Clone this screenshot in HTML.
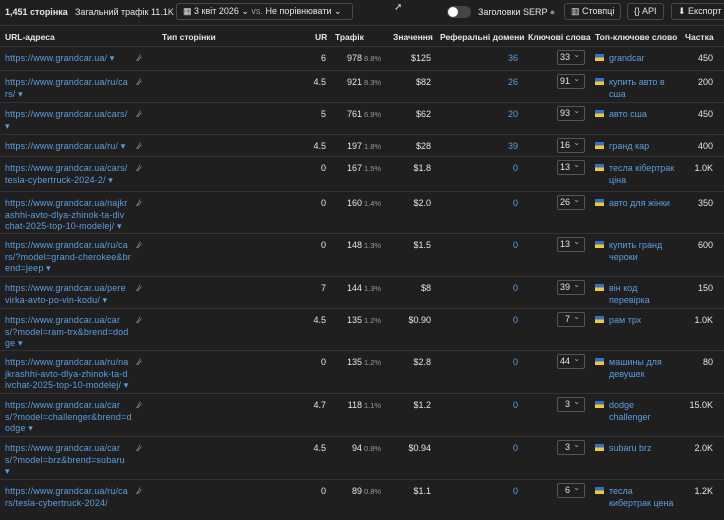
<!DOCTYPE html>
<html><head><meta charset="utf-8"><style>
*{margin:0;padding:0;box-sizing:border-box}
body{width:724px;height:512px;overflow:hidden;background:#1f1f20;font-family:"Liberation Sans",sans-serif;font-size:9px;color:#e6e6e6;position:relative}
.a{position:absolute;white-space:nowrap}
.top{position:absolute;left:0;top:0;width:724px;height:26px;border-bottom:1px solid #333}
.btn{position:absolute;top:3px;height:17px;border:1px solid #4a4a4a;border-radius:3px;line-height:15px;padding:0 6px;color:#e6e6e6;font-size:9px}
.hdr{position:absolute;top:26px;left:0;width:724px;height:21px;border-bottom:1px solid #333;font-weight:bold;font-size:8.5px}
.row{position:absolute;left:0;width:724px;border-bottom:1px solid #333}
.url{position:absolute;left:5px;top:6px;color:#5a9fe0;line-height:11.6px;white-space:nowrap;letter-spacing:0.15px}
.r{position:absolute;text-align:right;top:6px}
.link{color:#5a9fe0}
.pct{color:#999;font-size:7.5px}
.kw{position:absolute;left:557px;top:3px;width:28px;height:15px;border:1px solid #555;border-radius:2px;text-align:right;padding-right:14px;line-height:13px}
.kw:after{content:"⌄";position:absolute;right:4px;top:-3px;color:#aaa;font-size:8px}
.flag{position:absolute;left:595px;top:7px;width:9px;height:7px;background:linear-gradient(#2f6fd6 50%,#f2cb1d 50%)}
.tk{position:absolute;left:609px;top:6px;color:#5a9fe0;line-height:11.6px;white-space:nowrap}
.w{position:absolute;left:138px;top:6px;color:#aaa;font-size:9px}
</style></head><body>
<div class="top">
<div class="a" style="left:5px;top:7px;font-weight:bold">1,451 сторінка</div>
<div class="a" style="left:75px;top:7px">Загальний трафік 11.1K</div>
<div class="btn" style="left:176px;width:177px">▦ 3 квіт 2026 ⌄ <span style="color:#999">vs.</span> Не порівнювати ⌄</div>
<div class="a" style="left:394px;top:2px;color:#ddd;font-size:10px">➚</div>
<div class="a" style="left:447px;top:6px;width:24px;height:12px;border-radius:6px;background:#444"><div style="position:absolute;left:1px;top:1px;width:10px;height:10px;border-radius:5px;background:#fff"></div></div>
<div class="a" style="left:478px;top:7px">Заголовки SERP <span style="color:#888">●</span></div>
<div class="btn" style="left:564px">▥ Стовпці</div>
<div class="btn" style="left:627px">{} API</div>
<div class="btn" style="left:671px;width:60px">⬇ Експорт</div>
</div>
<div class="hdr">
<div class="a" style="left:5px;top:6px">URL-адреса</div>
<div class="a" style="left:162px;top:6px">Тип сторінки</div>
<div class="a" style="left:315px;top:6px">UR</div>
<div class="a" style="left:335px;top:6px">Трафік</div>
<div class="a" style="left:393px;top:6px">Значення</div>
<div class="a" style="left:440px;top:6px">Реферальні домени</div>
<div class="a" style="left:528px;top:6px">Ключові слова</div>
<div class="a" style="left:595px;top:6px">Топ-ключове слово</div>
<div class="a" style="left:685px;top:6px">Частка</div>
</div>

<div class="row" style="top:47px;height:24px"><div class="url">https://www.grandcar.ua/ ▾</div><div class="w">⁄̷</div><div class="r" style="right:398px">6</div><div class="r" style="right:362px">978</div><div class="a pct" style="left:364px;top:7px">8.8%</div><div class="r" style="right:293px">$125</div><div class="r link" style="right:206px">36</div><div class="kw">33</div><div class="flag"></div><div class="tk">grandcar</div><div class="r" style="right:11px">450</div></div>
<div class="row" style="top:71px;height:32px"><div class="url">https://www.grandcar.ua/ru/ca<br>rs/ ▾</div><div class="w">⁄̷</div><div class="r" style="right:398px">4.5</div><div class="r" style="right:362px">921</div><div class="a pct" style="left:364px;top:7px">8.3%</div><div class="r" style="right:293px">$82</div><div class="r link" style="right:206px">26</div><div class="kw">91</div><div class="flag"></div><div class="tk">купить авто в<br>сша</div><div class="r" style="right:11px">200</div></div>
<div class="row" style="top:103px;height:32px"><div class="url">https://www.grandcar.ua/cars/<br>▾</div><div class="w">⁄̷</div><div class="r" style="right:398px">5</div><div class="r" style="right:362px">761</div><div class="a pct" style="left:364px;top:7px">6.9%</div><div class="r" style="right:293px">$62</div><div class="r link" style="right:206px">20</div><div class="kw">93</div><div class="flag"></div><div class="tk">авто сша</div><div class="r" style="right:11px">450</div></div>
<div class="row" style="top:135px;height:22px"><div class="url">https://www.grandcar.ua/ru/ ▾</div><div class="w">⁄̷</div><div class="r" style="right:398px">4.5</div><div class="r" style="right:362px">197</div><div class="a pct" style="left:364px;top:7px">1.8%</div><div class="r" style="right:293px">$28</div><div class="r link" style="right:206px">39</div><div class="kw">16</div><div class="flag"></div><div class="tk">гранд кар</div><div class="r" style="right:11px">400</div></div>
<div class="row" style="top:157px;height:35px"><div class="url">https://www.grandcar.ua/cars/<br>tesla-cybertruck-2024-2/ ▾</div><div class="w">⁄̷</div><div class="r" style="right:398px">0</div><div class="r" style="right:362px">167</div><div class="a pct" style="left:364px;top:7px">1.5%</div><div class="r" style="right:293px">$1.8</div><div class="r link" style="right:206px">0</div><div class="kw">13</div><div class="flag"></div><div class="tk">тесла кібертрак<br>ціна</div><div class="r" style="right:11px">1.0K</div></div>
<div class="row" style="top:192px;height:42px"><div class="url">https://www.grandcar.ua/najkr<br>ashhi-avto-dlya-zhinok-ta-div<br>chat-2025-top-10-modelej/ ▾</div><div class="w">⁄̷</div><div class="r" style="right:398px">0</div><div class="r" style="right:362px">160</div><div class="a pct" style="left:364px;top:7px">1.4%</div><div class="r" style="right:293px">$2.0</div><div class="r link" style="right:206px">0</div><div class="kw">26</div><div class="flag"></div><div class="tk">авто для жінки</div><div class="r" style="right:11px">350</div></div>
<div class="row" style="top:234px;height:43px"><div class="url">https://www.grandcar.ua/ru/ca<br>rs/?model=grand-cherokee&amp;br<br>end=jeep ▾</div><div class="w">⁄̷</div><div class="r" style="right:398px">0</div><div class="r" style="right:362px">148</div><div class="a pct" style="left:364px;top:7px">1.3%</div><div class="r" style="right:293px">$1.5</div><div class="r link" style="right:206px">0</div><div class="kw">13</div><div class="flag"></div><div class="tk">купить гранд<br>чероки</div><div class="r" style="right:11px">600</div></div>
<div class="row" style="top:277px;height:32px"><div class="url">https://www.grandcar.ua/pere<br>virka-avto-po-vin-kodu/ ▾</div><div class="w">⁄̷</div><div class="r" style="right:398px">7</div><div class="r" style="right:362px">144</div><div class="a pct" style="left:364px;top:7px">1.3%</div><div class="r" style="right:293px">$8</div><div class="r link" style="right:206px">0</div><div class="kw">39</div><div class="flag"></div><div class="tk">він код<br>перевірка</div><div class="r" style="right:11px">150</div></div>
<div class="row" style="top:309px;height:42px"><div class="url">https://www.grandcar.ua/car<br>s/?model=ram-trx&amp;brend=dod<br>ge ▾</div><div class="w">⁄̷</div><div class="r" style="right:398px">4.5</div><div class="r" style="right:362px">135</div><div class="a pct" style="left:364px;top:7px">1.2%</div><div class="r" style="right:293px">$0.90</div><div class="r link" style="right:206px">0</div><div class="kw">7</div><div class="flag"></div><div class="tk">рам трх</div><div class="r" style="right:11px">1.0K</div></div>
<div class="row" style="top:351px;height:43px"><div class="url">https://www.grandcar.ua/ru/na<br>jkrashhi-avto-dlya-zhinok-ta-d<br>ivchat-2025-top-10-modelej/ ▾</div><div class="w">⁄̷</div><div class="r" style="right:398px">0</div><div class="r" style="right:362px">135</div><div class="a pct" style="left:364px;top:7px">1.2%</div><div class="r" style="right:293px">$2.8</div><div class="r link" style="right:206px">0</div><div class="kw">44</div><div class="flag"></div><div class="tk">машины для<br>девушек</div><div class="r" style="right:11px">80</div></div>
<div class="row" style="top:394px;height:43px"><div class="url">https://www.grandcar.ua/car<br>s/?model=challenger&amp;brend=d<br>odge ▾</div><div class="w">⁄̷</div><div class="r" style="right:398px">4.7</div><div class="r" style="right:362px">118</div><div class="a pct" style="left:364px;top:7px">1.1%</div><div class="r" style="right:293px">$1.2</div><div class="r link" style="right:206px">0</div><div class="kw">3</div><div class="flag"></div><div class="tk">dodge<br>challenger</div><div class="r" style="right:11px">15.0K</div></div>
<div class="row" style="top:437px;height:43px"><div class="url">https://www.grandcar.ua/car<br>s/?model=brz&amp;brend=subaru<br>▾</div><div class="w">⁄̷</div><div class="r" style="right:398px">4.5</div><div class="r" style="right:362px">94</div><div class="a pct" style="left:364px;top:7px">0.8%</div><div class="r" style="right:293px">$0.94</div><div class="r link" style="right:206px">0</div><div class="kw">3</div><div class="flag"></div><div class="tk">subaru brz</div><div class="r" style="right:11px">2.0K</div></div>
<div class="row" style="top:480px;height:40px;border:none"><div class="url">https://www.grandcar.ua/ru/ca<br>rs/tesla-cybertruck-2024/</div><div class="w">⁄̷</div><div class="r" style="right:398px">0</div><div class="r" style="right:362px">89</div><div class="a pct" style="left:364px;top:7px">0.8%</div><div class="r" style="right:293px">$1.1</div><div class="r link" style="right:206px">0</div><div class="kw">6</div><div class="flag"></div><div class="tk">тесла<br>кибертрак цена</div><div class="r" style="right:11px">1.2K</div></div>
</body></html>
